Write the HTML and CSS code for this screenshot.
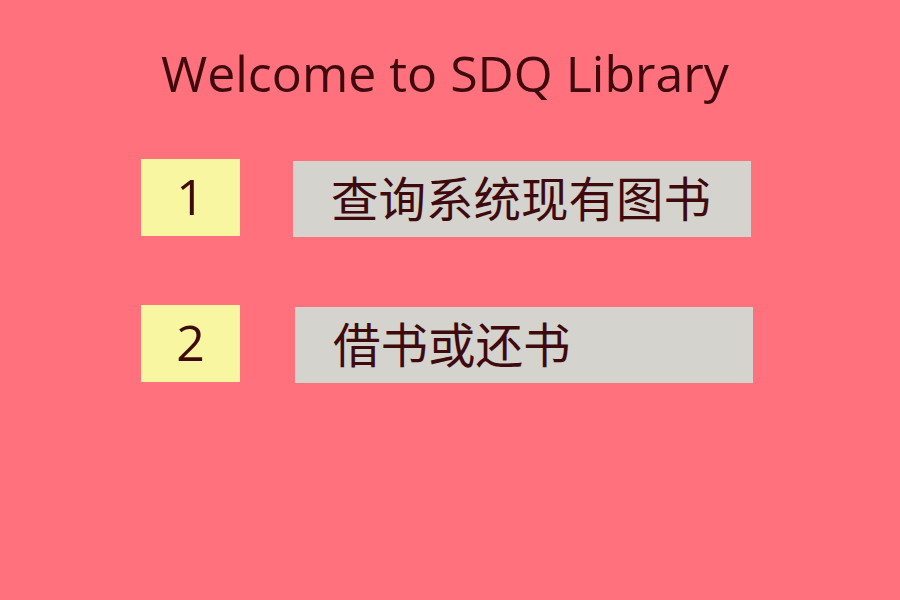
FILE: index.html
```html
<!DOCTYPE html>
<html lang="zh">
<head>
<meta charset="utf-8">
<title>SDQ Library</title>
<link rel="stylesheet" href="styles.css">
</head>
<body>
<main class="page">
  <h1 class="title">Welcome to SDQ Library</h1>
  <div class="menu">
    <div class="row row-1">
      <div class="num">1</div>
      <div class="label">查询系统现有图书</div>
    </div>
    <div class="row row-2">
      <div class="num">2</div>
      <div class="label">借书或还书</div>
    </div>
  </div>
</main>
</body>
</html>
```
FILE: styles.css
```css
html, body {
  margin: 0;
  padding: 0;
  background: #ff717d;
  height: 100%;
}
.page {
  width: 900px;
  height: 600px;
  font-family: "Open Sans", "Noto Sans CJK SC", sans-serif;
  color: #3f0a0d;
  display: flex;
  flex-direction: column;
}
.title {
  margin: 40px 0 0 0;
  padding-left: 161px;
  font-size: 50px;
  font-weight: 400;
  line-height: 66px;
  height: 66px;
}
.menu {
  display: flex;
  flex-direction: column;
  gap: 68px;
  padding-left: 141px;
  margin-top: 53px;
}
.row {
  display: flex;
  align-items: flex-start;
}
.num {
  width: 99px;
  height: 77px;
  background: #f8f6a0;
  display: flex;
  align-items: center;
  justify-content: center;
  font-size: 50px;
  font-weight: 500;
  padding-bottom: 4px;
  box-sizing: border-box;
}
.label {
  width: 420px;
  height: 71px;
  background: #d4d3ce;
  margin-top: 2px;
  padding-left: 38px;
  padding-bottom: 5px;
  display: flex;
  align-items: center;
  font-family: "Noto Sans CJK SC", sans-serif;
  font-size: 47.5px;
  font-weight: 400;
}
.row-1 .label { margin-left: 53px; }
.row-2 .label { margin-left: 55px; }
```
